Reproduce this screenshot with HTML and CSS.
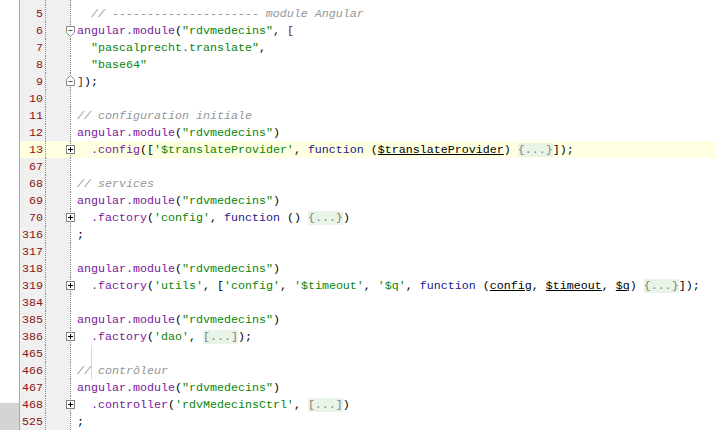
FILE: index.html
```html
<!DOCTYPE html>
<html>
<head>
<meta charset="utf-8">
<link rel="stylesheet" href="styles.css">
</head>
<body>
<div class="editor">
  <div class="strip"><div class="strip-fill"></div><div class="strip-block"></div></div>
  <div class="lines">
    <div class="row"><span class="num">4</span><span class="fold"></span><span class="code"></span></div>
    <div class="row"><span class="num">5</span><span class="fold"></span><span class="code">  <i class="c">// --------------------- module Angular</i></span></div>
    <div class="row"><span class="num">6</span><span class="fold"><svg class="ficon" width="11" height="13" viewBox="0 0 11 13"><path d="M1.5 1.5h8v6l-4 4l-4-4z" fill="#fff" stroke="#8a8a8a"/><path d="M3.5 5.5h4" stroke="#555"/></svg></span><span class="code"><span class="m">angular.module</span>(<span class="s">"rdvmedecins"</span>, <span class="b">[</span></span></div>
    <div class="row"><span class="num">7</span><span class="fold"></span><span class="code">  <span class="s">"pascalprecht.translate"</span>,</span></div>
    <div class="row"><span class="num">8</span><span class="fold"></span><span class="code">  <span class="s">"base64"</span></span></div>
    <div class="row"><span class="num">9</span><span class="fold"><svg class="ficon up" width="11" height="13" viewBox="0 0 11 13"><path d="M1.5 11.5h8v-6l-4-4l-4 4z" fill="#fff" stroke="#8a8a8a"/><path d="M3.5 7.5h4" stroke="#555"/></svg></span><span class="code"><span class="b">]</span>);</span></div>
    <div class="row"><span class="num">10</span><span class="fold"></span><span class="code"></span></div>
    <div class="row"><span class="num">11</span><span class="fold"></span><span class="code"><i class="c">// configuration initiale</i></span></div>
    <div class="row"><span class="num">12</span><span class="fold"></span><span class="code"><span class="m">angular.module</span>(<span class="s">"rdvmedecins"</span>)</span></div>
    <div class="row cur"><span class="num">13</span><span class="fold"><span class="plus"></span></span><span class="code">  <span class="m">.config</span>([<span class="s">'$translateProvider'</span>, <span class="k">function</span> (<span class="p">$translateProvider</span>) <span class="f">{...}</span>]);</span></div>
    <div class="row"><span class="num">67</span><span class="fold"></span><span class="code"></span></div>
    <div class="row"><span class="num">68</span><span class="fold"></span><span class="code"><i class="c">// services</i></span></div>
    <div class="row"><span class="num">69</span><span class="fold"></span><span class="code"><span class="m">angular.module</span>(<span class="s">"rdvmedecins"</span>)</span></div>
    <div class="row"><span class="num">70</span><span class="fold"><span class="plus"></span></span><span class="code">  <span class="m">.factory</span>(<span class="s">'config'</span>, <span class="k">function</span> () <span class="f">{...}</span>)</span></div>
    <div class="row"><span class="num">316</span><span class="fold"></span><span class="code">;</span></div>
    <div class="row"><span class="num">317</span><span class="fold"></span><span class="code"></span></div>
    <div class="row"><span class="num">318</span><span class="fold"></span><span class="code"><span class="m">angular.module</span>(<span class="s">"rdvmedecins"</span>)</span></div>
    <div class="row"><span class="num">319</span><span class="fold"><span class="plus"></span></span><span class="code">  <span class="m">.factory</span>(<span class="s">'utils'</span>, [<span class="s">'config'</span>, <span class="s">'$timeout'</span>, <span class="s">'$q'</span>, <span class="k">function</span> (<span class="p">config</span>, <span class="p">$timeout</span>, <span class="p">$q</span>) <span class="f">{...}</span>]);</span></div>
    <div class="row"><span class="num">384</span><span class="fold"></span><span class="code"></span></div>
    <div class="row"><span class="num">385</span><span class="fold"></span><span class="code"><span class="m">angular.module</span>(<span class="s">"rdvmedecins"</span>)</span></div>
    <div class="row"><span class="num">386</span><span class="fold"><span class="plus"></span></span><span class="code">  <span class="m">.factory</span>(<span class="s">'dao'</span>, <span class="f">[...]</span>);</span></div>
    <div class="row"><span class="num">465</span><span class="fold"></span><span class="code"><span class="guide"></span></span></div>
    <div class="row"><span class="num">466</span><span class="fold"></span><span class="code"><i class="c">//<span class="guide"></span> contrôleur</i></span></div>
    <div class="row"><span class="num">467</span><span class="fold"></span><span class="code"><span class="m">angular.module</span>(<span class="s">"rdvmedecins"</span>)</span></div>
    <div class="row"><span class="num">468</span><span class="fold"><span class="plus"></span></span><span class="code">  <span class="m">.controller</span>(<span class="s">'rdvMedecinsCtrl'</span>, <span class="f">[...]</span>)</span></div>
    <div class="row"><span class="num">525</span><span class="fold"></span><span class="code">;</span></div>
  </div>
</div>
</body>
</html>
```

FILE: styles.css
```css
html, body {
  margin: 0;
  padding: 0;
  background: #fff;
  overflow: hidden;
}
.editor {
  display: flex;
  width: 716px;
  height: 430px;
  overflow: hidden;
  font-family: "Liberation Mono", "Courier New", monospace;
  font-size: 11.6667px;
  color: #000;
}
.strip {
  width: 19px;
  flex: none;
  border-right: 1px solid #a9a9a9;
  display: flex;
  flex-direction: column;
  background: #fff;
}
.strip-fill { flex: 1; }
.strip-block { height: 27px; background: #d4d4d4; }
.lines {
  flex: 1;
  margin-top: -12px;
  display: flex;
  flex-direction: column;
}
.row {
  position: relative;
  display: flex;
  height: 17px;
  line-height: 17px;
  flex: none;
}
.row.cur { background: #ffffe1; }
.num {
  width: 23px;
  padding-right: 2px;
  padding-top: 1px;
  height: 16px;
  text-align: right;
  color: #8b1212;
  background: #f0f0f0;
  border-right: 1px dotted #888;
  flex: none;
}
.cur .num, .cur .fold { background: #ffffe1; }
.fold {
  width: 24px;
  background: #f0f0f0;
  border-right: 1px dotted #888;
  flex: none;
  position: relative;
}
.code {
  padding-left: 6px;
  padding-top: 1px;
  height: 16px;
  white-space: pre;
  position: relative;
}
.c { color: #969696; font-style: italic; }
.s { color: #078507; }
.m { color: #77209a; }
.k { color: #1b1b8c; }
.b { color: #6e1c3a; }
.p { text-decoration: underline; }
.f { color: #808080; background: #e8f4e8; }
.plus {
  position: absolute;
  right: -5px;
  top: 4px;
  width: 7px;
  height: 7px;
  border: 1px solid #808080;
  background: #fff;
}
.plus::before, .plus::after {
  content: "";
  position: absolute;
  background: #000;
}
.plus::before { left: 1px; top: 3px; width: 5px; height: 1px; }
.plus::after { left: 3px; top: 1px; width: 1px; height: 5px; }
.ficon {
  position: absolute;
  right: -6px;
  top: 3px;
}
.ficon.up { top: 1px; }
.guide {
  display: inline-block;
  width: 1px;
  height: 17px;
  margin-top: -1px;
  background: #d8d8d8;
  vertical-align: top;
  margin-left: 14px;
}
.c .guide { margin-left: 0; margin-right: -1px; }
```
